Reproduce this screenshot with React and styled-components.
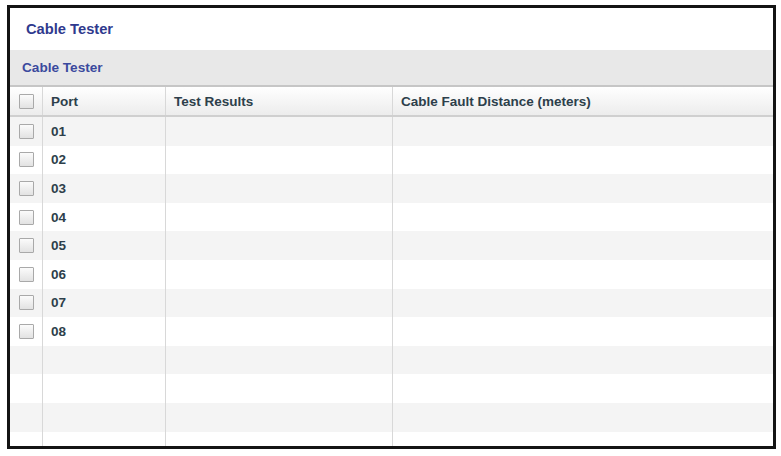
import React from "react"
import styled, { createGlobalStyle } from "styled-components"

const GlobalStyle = createGlobalStyle`
  html, body {
    margin: 0;
    padding: 0;
    background: #fff;
    font-family: "Liberation Sans", Arial, sans-serif;
  }
`

const Frame = styled.div`
  box-sizing: border-box;
  margin: 5px 0 0 7px;
  width: 769px;
  height: 444px;
  border: 3px solid #141414;
  display: flex;
  flex-direction: column;
  overflow: hidden;
  background: #fff;
`
const Title = styled.div`
  height: 42px;
  flex: none;
  display: flex;
  align-items: center;
  padding-left: 16px;
  font-size: 14.7px;
  font-weight: bold;
  color: #2f3a8e;
`
const SectionBar = styled.div`
  height: 35px;
  flex: none;
  display: flex;
  align-items: center;
  padding-left: 12px;
  background: #e8e8e8;
  border-bottom: 2px solid #c6c6c6;
  font-size: 13.6px;
  font-weight: bold;
  color: #3b4a9e;
`
const Row = styled.div`
  display: grid;
  grid-template-columns: 33px 123px 227px 1fr;
  height: ${p => (p.$header ? "28px" : "28.6px")};
  flex: none;
  background: ${p =>
    p.$header
      ? "linear-gradient(#ffffff, #ececec)"
      : p.$odd
      ? "#f4f4f4"
      : "#ffffff"};
  border-bottom: ${p => (p.$header ? "2px solid #cfcfcf" : "none")};
`
const Cell = styled.div`
  display: flex;
  align-items: center;
  justify-content: ${p => (p.$center ? "center" : "flex-start")};
  padding-left: ${p => (p.$center ? "0" : "8px")};
  border-right: ${p => (p.$last ? "none" : "1px solid #d8d8d8")};
  font-size: 13.5px;
  font-weight: bold;
  color: #2d3f4b;
  white-space: nowrap;
`
const Check = styled.span`
  box-sizing: border-box;
  width: 15px;
  height: 15px;
  border: 1px solid #a9a9a9;
  border-radius: 1px;
  background: linear-gradient(#fbfbfb, #e2e2e2);
`

const ports = ["01", "02", "03", "04", "05", "06", "07", "08", "", "", "", ""]

export default function App() {
  return (
    <>
      <GlobalStyle />
      <Frame>
        <Title>Cable Tester</Title>
        <SectionBar>Cable Tester</SectionBar>
        <Row $header>
          <Cell $center><Check /></Cell>
          <Cell>Port</Cell>
          <Cell>Test Results</Cell>
          <Cell $last>Cable Fault Distance (meters)</Cell>
        </Row>
        {ports.map((p, i) => (
          <Row key={i} $odd={i % 2 === 0}>
            <Cell $center>{p && <Check />}</Cell>
            <Cell>{p}</Cell>
            <Cell />
            <Cell $last />
          </Row>
        ))}
      </Frame>
    </>
  )
}
